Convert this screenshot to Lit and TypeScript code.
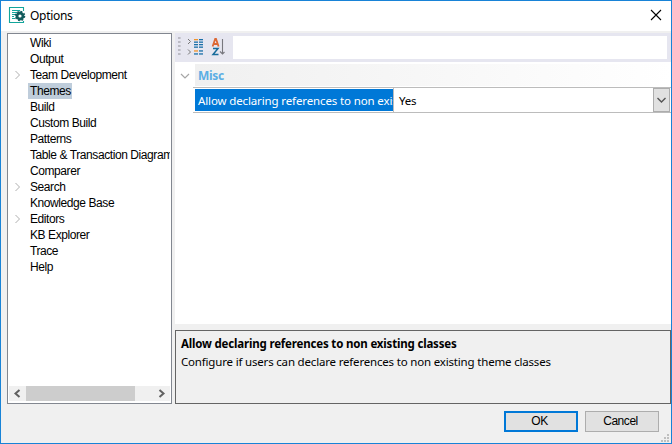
import { LitElement, html, css, svg } from "lit";
import { customElement } from "lit/decorators.js";
import { classMap } from "lit/directives/class-map.js";

interface Item { label: string; children?: boolean; selected?: boolean }

const items: Item[] = [
  { label: "Wiki" },
  { label: "Output" },
  { label: "Team Development", children: true },
  { label: "Themes", selected: true },
  { label: "Build" },
  { label: "Custom Build" },
  { label: "Patterns" },
  { label: "Table & Transaction Diagram" },
  { label: "Comparer" },
  { label: "Search", children: true },
  { label: "Knowledge Base" },
  { label: "Editors", children: true },
  { label: "KB Explorer" },
  { label: "Trace" },
  { label: "Help" },
];

@customElement("options-tree")
class OptionsTree extends LitElement {
  static styles = css`
    :host { display: flex; flex-direction: column; box-sizing: border-box; width: 165px; height: 371px; border: 1px solid #828790; background: #fff; padding: 1px; font: 12px/16px "Liberation Sans", sans-serif; letter-spacing: -0.42px; color: #000; }
    .list { flex: 1; overflow: hidden; }
    .row { display: flex; height: 16px; white-space: nowrap; }
    .arrow { width: 19px; flex: none; }
    .arrow svg { display: block; }
    .label { padding: 0 2px; height: 16px; }
    .selected { padding-right: 1px; background: #bfcddb; }
    .scroll { display: flex; height: 15px; margin-bottom: 1px; background: #f0f0f0; }
    .thumb { width: 109px; background: #cdcdcd; }
    .gap { flex: 1; }
    .scroll svg { display: block; }
  `;
  render() {
    return html`
      <div class="list">
        ${items.map((i) => html`<div class="row">
          <div class="arrow">${i.children
            ? html`<svg width="19" height="16"><path d="M6.5 4l4 4-4 4" fill="none" stroke="#b0b0b0"/></svg>` : ""}</div>
          <div class=${classMap({ label: true, selected: !!i.selected })}>${i.label}</div>
        </div>`)}
      </div>
      <div class="scroll">
        <svg width="17" height="15"><path d="M10.5 4l-4 3.5 4 3.5" fill="none" stroke="#606060" stroke-width="2"/></svg>
        <div class="thumb"></div><div class="gap"></div>
        <svg width="17" height="15"><path d="M6.5 4l4 3.5-4 3.5" fill="none" stroke="#606060" stroke-width="2"/></svg>
      </div>`;
  }
}

@customElement("property-panel")
class PropertyPanel extends LitElement {
  static styles = css`
    :host { display: flex; flex-direction: column; width: 496px; height: 371px; font: 11.5px/16px "Noto Sans", sans-serif; letter-spacing: -0.18px; color: #000; }
    .toolbar { display: flex; box-sizing: border-box; height: 29px; padding: 3px 4px 3px 0; background: #e6e6f0; }
    .icons { flex: none; width: 58px; height: 23px; }
    .search { flex: 1; background: #fff; }
    .grid { box-sizing: border-box; height: 262px; background: #fff; padding-top: 2px; }
    .category { display: flex; height: 23px; }
    .chev { width: 20px; flex: none; }
    .cat { flex: 1; height: 22px; padding-left: 3px; background: linear-gradient(90deg, #f0f0f0, #fff); color: #5caee4; font-weight: 700; font-size: 12px; line-height: 23px; letter-spacing: -0.35px; }
    .prop { display: flex; box-sizing: border-box; height: 26px; margin-left: 18px; border-top: 1px solid #bcbcbc; border-bottom: 1px solid #bcbcbc; }
    .name { box-sizing: border-box; width: 198px; margin: 1px 0 1px 2px; padding-left: 3px; background: #0078d7; color: #fff; line-height: 23px; white-space: nowrap; overflow: hidden; letter-spacing: -0.13px; }
    .value { flex: 1; border-left: 1px solid #bcbcbc; padding-left: 5px; line-height: 25px; }
    .drop { box-sizing: border-box; width: 17px; margin-right: 1px; background: #e1e1e1; border: 1px solid #adadad; }
    .drop svg { display: block; }
    .help { box-sizing: border-box; margin-top: 6px; height: 74px; border: 1px solid #646464; padding: 4px 5px; line-height: 18px; white-space: nowrap; }
    .title { font-weight: 700; }
  `;
  render() {
    const bar = (x: number, y: number, fill: string) => svg`<rect x=${x} y=${y} width="4" height="1.3" fill=${fill}/>`;
    const blue = "#1a6fa8";
    return html`
      <div class="toolbar">
        <svg class="icons" viewBox="0 0 58 23">
          ${[1, 5, 9, 13, 17].map((y) => svg`<rect x="3" y=${y} width="2.6" height="2" fill="#bbbbc3"/>`)}
          <g fill="none" stroke="#777"><path d="M13 3l2.5 2.5L13 8M13 13.5l2.5 2.5-2.5 2.5"/></g>
          ${bar(19, 3, "#f0932b")}
          ${[5.5, 8, 10.5].map((y) => bar(19, y, blue))}
          ${[3, 5.5, 8, 10.5].map((y) => bar(24, y, blue))}
          ${bar(19, 14.3, "#f0932b")}${bar(19, 17.3, blue)}
          ${[14.3, 17.3].map((y) => bar(24, y, blue))}
          <g fill="none">
            <path d="M37.6 10.5L40.2 3h.8l2.6 7.5M38.6 8h4" stroke="#dc6834" stroke-width="1.8"/>
            <path d="M38 12.5h5l-5 6h5.5" stroke="#176b9b" stroke-width="1.5"/>
            <path d="M47.5 3v15M45 15.5l2.5 2.5 2-2" stroke="#77777e" stroke-width="1.1"/>
          </g>
        </svg>
        <div class="search"></div>
      </div>
      <div class="grid">
        <div class="category">
          <svg class="chev" height="22"><path d="M6 10l4 4 4-4" fill="none" stroke="#a6a6a6" stroke-width="1.2"/></svg>
          <div class="cat">Misc</div>
        </div>
        <div class="prop">
          <div class="name">Allow declaring references to non existing classes</div>
          <div class="value">Yes</div>
          <div class="drop"><svg width="15" height="22"><path d="M3.5 9l4 4 4-4" fill="none" stroke="#555" stroke-width="1.4"/></svg></div>
        </div>
      </div>
      <div class="help">
        <div class="title">Allow declaring references to non existing classes</div>
        <div class="text">Configure if users can declare references to non existing theme classes</div>
      </div>`;
  }
}

@customElement("app-root")
class AppRoot extends LitElement {
  static styles = css`
    :host { display: flex; flex-direction: column; position: relative; box-sizing: border-box; width: 672px; height: 444px; border: 1px solid #1883d7; background: #f0f0f0; overflow: hidden; }
    .titlebar { display: flex; height: 30px; background: #fff; }
    .logo { flex: none; width: 29px; height: 30px; }
    .caption { flex: 1; font: 12px/29px "Noto Sans", sans-serif; letter-spacing: -0.3px; color: #000; }
    .close { flex: none; width: 30px; height: 30px; }
    .main { display: flex; gap: 3px; margin: 2px 0 0 6px; }
    .buttons { display: flex; justify-content: flex-end; gap: 7px; margin: 7px 12px 0 0; }
    .button { box-sizing: border-box; width: 74px; height: 21px; border: 1px solid #adadad; background: #e1e1e1; padding: 0 3px 0 0; font: 12px/19px "Liberation Sans", sans-serif; text-align: center; color: #000; letter-spacing: -0.45px; }
    .ok { border: 2px solid #0078d7; line-height: 17px; padding-right: 3px; }
    .grip { position: absolute; right: 2px; bottom: 1px; }
  `;
  render() {
    return html`
      <div class="titlebar">
        <svg class="logo" viewBox="1 1 29 30">
          <path d="M23.5 11V7.5h-14v15h14V21" fill="none" stroke="#12a59b" stroke-width="1.1"/>
          <path d="M12 10.5h8M12 12.5h5M12 14.5h3M12 16.5h2M12 18.5h3" stroke="#12a59b"/>
          <circle cx="20" cy="16" r="3" fill="none" stroke="#125c5d" stroke-width="2.8"/>
          <circle cx="20" cy="16" r="4.6" fill="none" stroke="#125c5d" stroke-width="1.4" stroke-dasharray="1.8 1.81"/>
        </svg>
        <div class="caption">Options</div>
        <svg class="close" viewBox="641 1 30 30"><path d="M651 10l10 10M661 10l-10 10" stroke="#000" stroke-width="1.1"/></svg>
      </div>
      <div class="main"><options-tree></options-tree><property-panel></property-panel></div>
      <div class="buttons">
        <button class="button ok">OK</button>
        <button class="button">Cancel</button>
      </div>
      <svg class="grip" width="8" height="8" fill="#bfbfbf">
        ${[[6, 0], [3, 3], [6, 3], [0, 6], [3, 6], [6, 6]].map(([x, y]) => svg`<rect x=${x} y=${y} width="2" height="2"/>`)}
      </svg>`;
  }
}
